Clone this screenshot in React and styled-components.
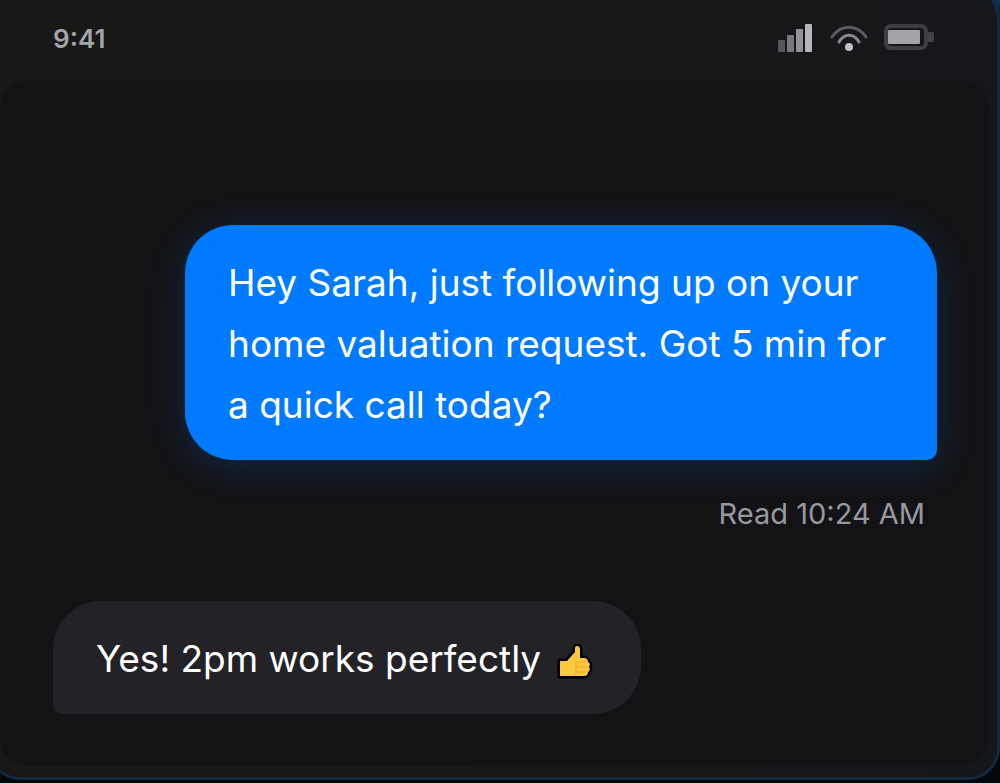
import React from "react";
import styled, { createGlobalStyle } from "styled-components";

const GlobalStyle = createGlobalStyle`
  *, *::before, *::after { box-sizing: border-box; }
  body {
    margin: 0;
    background: #03060b;
    color: #ffffff;
    font-family: Inter, "Liberation Sans", sans-serif;
    overflow: hidden;
  }
`;

const Backdrop = styled.div`
  min-height: 100vh;
  padding-bottom: 3px;
  display: flex;
  background: linear-gradient(180deg, #0b3157 0, #03060b 40px);
`;

const Phone = styled.main`
  flex: 1;
  display: flex;
  flex-direction: column;
  margin: -12px 0 0 -12px;
  padding: 12px 8px 8px 9px;
  border: 3px solid #142a3e;
  border-top: 0;
  border-radius: 32px;
  background: linear-gradient(100deg, #181817 0%, #171717 55%, #16171a 85%, #14171b 100%);
  background-clip: padding-box;
`;

const StatusBar = styled.header`
  display: flex;
  align-items: center;
  justify-content: space-between;
  height: 80px;
  padding: 0 54px 4px 53px;
`;

const Clock = styled.time`
  padding-top: 2px;
  font-size: 26px;
  line-height: 32px;
  font-weight: 600;
  color: #a4a4ad;
`;

const StatusIcons = styled.div`
  display: flex;
  align-items: center;
  gap: 15px;

  svg { display: block; }
`;

const Screen = styled.section`
  flex: 1;
  display: flex;
  flex-direction: column;
  justify-content: flex-end;
  margin-bottom: 3px;
  padding: 0 52px 52px 53px;
  border-radius: 28px;
  background: #131315;
`;

const Bubble = styled.p`
  align-self: ${({ $sent }) => ($sent ? "flex-end" : "flex-start")};
  max-width: 752px;
  margin: 0;
  padding: 27px 43px 25px;
  border-radius: ${({ $sent }) => ($sent ? "48px 48px 10px 48px" : "48px 48px 48px 10px")};
  background: ${({ $sent }) => ($sent ? "#007aff" : "#232327")};
  box-shadow: ${({ $sent }) => ($sent ? "0 6px 36px rgba(0, 122, 255, 0.22)" : "none")};
  font-size: 37px;
  line-height: 61px;
  color: #ffffff;
`;

const Receipt = styled.small`
  align-self: flex-end;
  margin: 35px 12px 68px 0;
  font-size: 29px;
  line-height: 38px;
  color: #98989f;
`;

const Thumb = styled.svg`
  display: inline-block;
  width: 36px;
  height: 36px;
  margin: 0 5px;
  vertical-align: -8px;
`;

function SignalIcon() {
  return (
    <svg width="36" height="28" viewBox="0 0 36 28" role="img" aria-label="Signal">
      <rect x="0" y="16" width="7" height="12" rx="1" fill="#56565b" />
      <rect x="9" y="11" width="7" height="17" rx="1" fill="#78787e" />
      <rect x="18" y="5" width="7" height="23" rx="1" fill="#929299" />
      <rect x="27" y="0" width="7" height="28" rx="1" fill="#b5b5bc" />
    </svg>
  );
}

function WifiIcon() {
  return (
    <svg width="40" height="28" viewBox="0 0 40 28" role="img" aria-label="Wi-Fi" fill="none">
      <path d="M3 13C12 0 28 0 37 13" stroke="#5c5c61" strokeWidth="3" strokeLinecap="round" />
      <path d="M10 18C15 9 25 9 30 18" stroke="#89898f" strokeWidth="3" strokeLinecap="round" />
      <circle cx="20" cy="23" r="4" fill="#c0c0c7" />
    </svg>
  );
}

function BatteryIcon() {
  return (
    <svg width="51" height="28" viewBox="0 0 51 28" role="img" aria-label="Battery">
      <rect x="2" y="2" width="40" height="22" rx="5" fill="none" stroke="#3e3e42" strokeWidth="4" />
      <rect x="4" y="6" width="32" height="14" rx="1" fill="#a3a3a9" />
      <path d="M44 8h4q2 0 2 2v6q0 2-2 2h-4z" fill="#434347" />
    </svg>
  );
}

function ThumbsUp() {
  return (
    <Thumb viewBox="0 0 36 36" role="img" aria-label="thumbs up">
      <path
        d="M3 17H10L18 8V4Q18 2 20 2Q23 2 23 6V14H28Q31 15 31 18Q34 20 32 23Q34 26 31 28Q31 32 27 32H3Z"
        fill="#ffc83d"
        stroke="#000000"
        strokeWidth="5"
        strokeLinejoin="round"
        paintOrder="stroke"
      />
      <path d="M19 18H30M19 23H31M19 28H30M19 18V31" fill="none" stroke="#eba92e" strokeWidth="1" />
    </Thumb>
  );
}

export default function App() {
  return (
    <>
      <GlobalStyle />
      <Backdrop>
        <Phone>
          <StatusBar>
            <Clock>9:41</Clock>
            <StatusIcons>
              <SignalIcon />
              <WifiIcon />
              <BatteryIcon />
            </StatusIcons>
          </StatusBar>
          <Screen aria-label="Conversation">
            <Bubble $sent>
              Hey Sarah, just following up on your home valuation request. Got 5 min for a quick call
              today?
            </Bubble>
            <Receipt>Read 10:24 AM</Receipt>
            <Bubble>
              Yes! 2pm works perfectly <ThumbsUp />
            </Bubble>
          </Screen>
        </Phone>
      </Backdrop>
    </>
  );
}
